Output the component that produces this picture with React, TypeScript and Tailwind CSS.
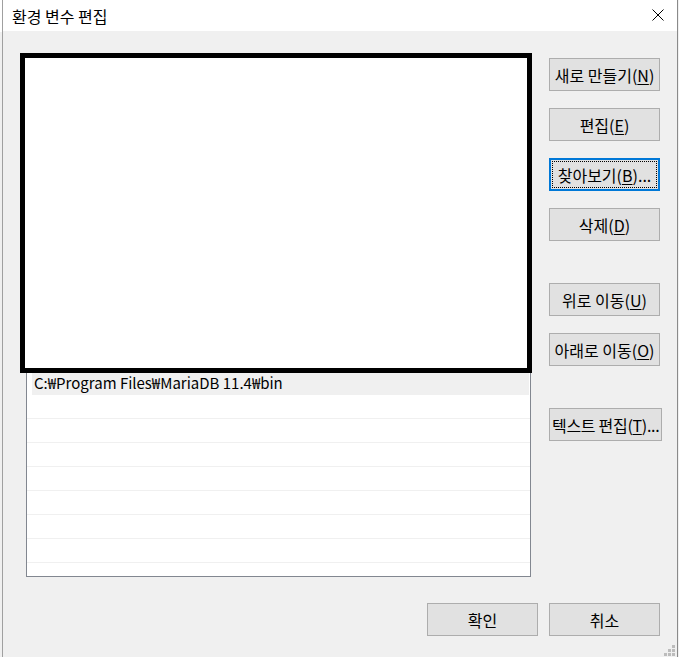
import React from "react";

const Btn: React.FC<{ label: string; k: string; tail?: string; focused?: boolean; wide?: boolean }> = ({
  label,
  k,
  tail = "",
  focused,
  wide,
}) => {
  return (
    <div
      className={
        "relative shrink-0 h-[33px] flex items-center justify-center whitespace-nowrap bg-[#e1e1e1] text-[16px] text-black " +
        (wide ? "min-w-[111px] px-[2px] tracking-[-0.3px] " : "w-[111px] ") +
        (focused ? "border-2 border-[#0078d7]" : "border border-[#adadad]")
      }
    >
      {focused && <span className="absolute inset-[1px] border border-dotted border-black"></span>}
      <span>
        {label}(<span className="underline underline-offset-2">{k}</span>){tail}
      </span>
    </div>
  );
};

const App: React.FC = () => {
  const rows = Array.from({ length: 22 });
  return (
    <div className="w-[679px] h-[657px] flex flex-row bg-[#f0f0f0] overflow-hidden font-['Noto_Sans_CJK_KR','Noto_Sans',sans-serif] text-black">
      {/* window behind */}
      <div className="w-[2px] shrink-0 flex flex-col bg-white">
        <div className="h-[32px] bg-white"></div>
        <div className="flex-1 bg-[#f0f0f0]"></div>
      </div>
      <div className="w-[1px] shrink-0 bg-[#a0a0a0]"></div>

      <div className="relative flex-1 min-w-0 flex flex-col">
        {/* title bar */}
        <div className="h-[31px] bg-white flex items-center justify-between pl-[9px] pr-[13px]">
          <span className="text-[16px] leading-none">환경 변수 편집</span>
          <svg width="12" height="12" viewBox="0 0 12 12" className="mb-[2px]">
            <path d="M0.5 0.5 L11.5 11.5 M11.5 0.5 L0.5 11.5" stroke="#000" strokeWidth="1" fill="none" />
          </svg>
        </div>

        {/* body */}
        <div className="flex-1 flex flex-col pl-[23px] pr-[17px] pt-[27px]">
          <div className="flex flex-row gap-[18px]">
            <div className="w-[505px] h-[519px] shrink-0 border border-[#828790] bg-white overflow-hidden">
              {rows.map((_, i) =>
                i === 13 ? (
                  <div key={i} className="h-[24px] pl-[5px] pr-[1px]">
                    <div className="h-full bg-[#f0f0f0] flex items-center pl-[2px] text-[15px]">
                      C:₩Program Files₩MariaDB 11.4₩bin
                    </div>
                  </div>
                ) : (
                  <div key={i} className="h-[24px] border-b border-[#f0f0f0]"></div>
                )
              )}
            </div>

            <div className="w-[111px] shrink-0 flex flex-col items-start">
              <Btn label="새로 만들기" k="N" />
              <div className="h-[17px]"></div>
              <Btn label="편집" k="E" />
              <div className="h-[17px]"></div>
              <Btn label="찾아보기" k="B" tail="..." focused />
              <div className="h-[17px]"></div>
              <Btn label="삭제" k="D" />
              <div className="h-[42px]"></div>
              <Btn label="위로 이동" k="U" />
              <div className="h-[17px]"></div>
              <Btn label="아래로 이동" k="O" />
              <div className="h-[42px]"></div>
              <Btn label="텍스트 편집" k="T" tail="..." wide />
            </div>
          </div>

          <div className="flex flex-row justify-end gap-[11px] mt-[26px]">
            <div className="w-[111px] h-[33px] flex items-center justify-center bg-[#e1e1e1] border border-[#adadad] text-[16px]">
              확인
            </div>
            <div className="w-[111px] h-[33px] flex items-center justify-center bg-[#e1e1e1] border border-[#adadad] text-[16px]">
              취소
            </div>
          </div>
        </div>

        {/* redaction box over the list */}
        <div className="absolute left-[17px] top-[53px] w-[512px] h-[320px] border-[5px] border-black bg-white"></div>

        {/* resize grip */}
        <svg width="11" height="11" viewBox="0 0 11 11" className="absolute right-[2px] bottom-[1px]">
          <rect x="8" y="0" width="3" height="3" fill="#bcbcbc" />
          <rect x="4" y="4" width="3" height="3" fill="#bcbcbc" />
          <rect x="8" y="4" width="3" height="3" fill="#bcbcbc" />
          <rect x="0" y="8" width="3" height="3" fill="#bcbcbc" />
          <rect x="4" y="8" width="3" height="3" fill="#bcbcbc" />
          <rect x="8" y="8" width="3" height="3" fill="#bcbcbc" />
        </svg>
      </div>

      <div className="w-[1px] shrink-0 bg-[#8a8a8a]"></div>
      <div className="w-[1px] shrink-0 bg-[#f0f0f0]"></div>
    </div>
  );
};

export default App;
